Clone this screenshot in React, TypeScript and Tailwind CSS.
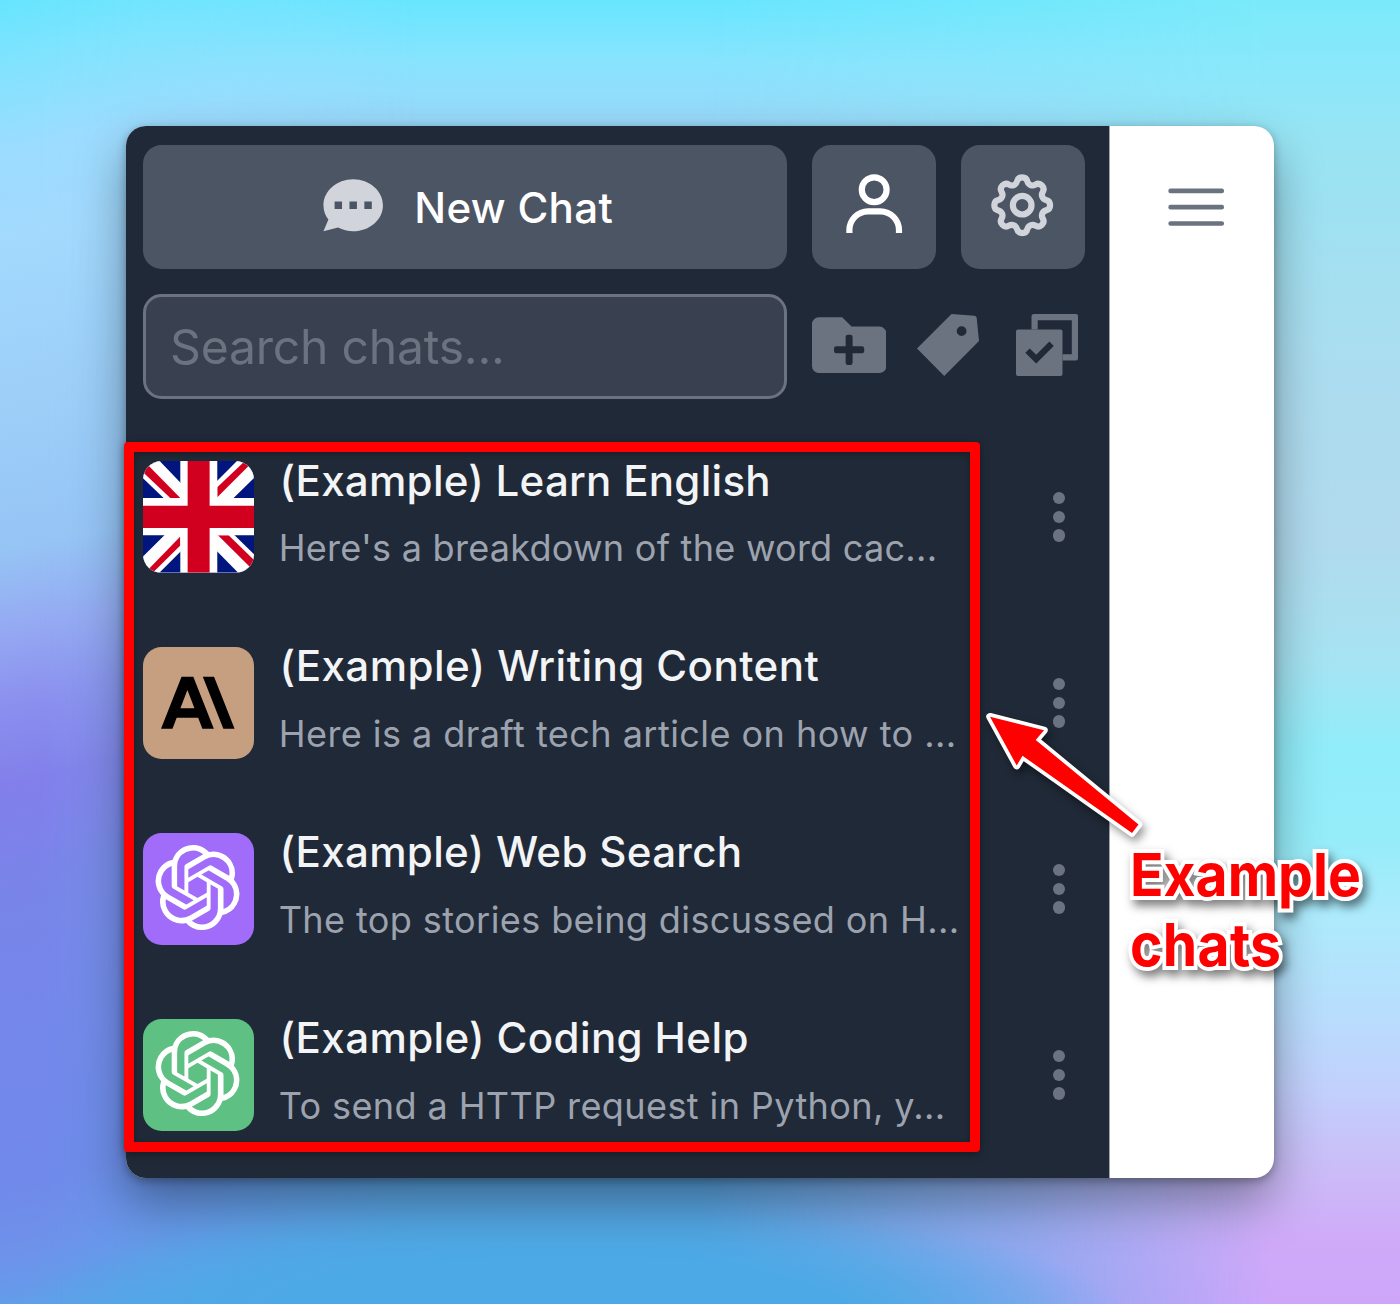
import type { ReactNode } from "react";
import { FaFolderPlus } from "react-icons/fa";
import { SiAnthropic, SiOpenai } from "react-icons/si";

function ChatBubbleIcon() {
  return (
    <svg viewBox="0 0 20 20" className="mb-[3px] size-[74.4px] shrink-0 fill-[#d1d5db]">
      <path
        fillRule="evenodd"
        clipRule="evenodd"
        d="M18 10c0 3.866-3.582 7-8 7a8.841 8.841 0 01-4.083-.98L2 17l1.338-3.123C2.493 12.767 2 11.434 2 10c0-3.866 3.582-7 8-7s8 3.134 8 7zM7 9H5v2h2V9zm8 0h-2v2h2V9zM9 9h2v2H9V9z"
      />
    </svg>
  );
}

function UserIcon() {
  return (
    <svg viewBox="0 0 24 24" className="mb-[3px] size-[74.4px] fill-white">
      <path d="M12 2a5 5 0 1 0 5 5 5 5 0 0 0-5-5zm0 8a3 3 0 1 1 3-3 3 3 0 0 1-3 3zm9 11v-1a7 7 0 0 0-7-7h-4a7 7 0 0 0-7 7v1h2v-1a5 5 0 0 1 5-5h4a5 5 0 0 1 5 5v1z" />
    </svg>
  );
}

function CogIcon() {
  return (
    <svg
      viewBox="0 0 24 24"
      className="mb-[3px] size-[74.4px] fill-none stroke-[#d1d5db]"
      strokeWidth={2}
      strokeLinecap="round"
      strokeLinejoin="round"
    >
      <path d="M10.325 4.317c.426-1.756 2.924-1.756 3.35 0a1.724 1.724 0 002.573 1.066c1.543-.94 3.31.826 2.37 2.37a1.724 1.724 0 001.065 2.572c1.756.426 1.756 2.924 0 3.35a1.724 1.724 0 00-1.066 2.573c.94 1.543-.826 3.31-2.37 2.37a1.724 1.724 0 00-2.572 1.065c-.426 1.756-2.924 1.756-3.35 0a1.724 1.724 0 00-2.573-1.066c-1.543.94-3.31-.826-2.37-2.37a1.724 1.724 0 00-1.065-2.572c-1.756-.426-1.756-2.924 0-3.35a1.724 1.724 0 001.066-2.573c-.94-1.543.826-3.31 2.37-2.37.996.608 2.296.07 2.572-1.065z" />
      <path d="M15 12a3 3 0 11-6 0 3 3 0 016 0z" />
    </svg>
  );
}

function TagIcon() {
  return (
    <svg viewBox="0 0 62 62" className="size-[62px] fill-[#6b7280]">
      <path
        fillRule="evenodd"
        d="M34.5 0 57.5 1.8Q59.6 2 59.7 4L62 27 27.2 62 0 34.6ZM44.6 12.2a4.9 4.9 0 1 0 0 9.8 4.9 4.9 0 0 0 0-9.8Z"
      />
    </svg>
  );
}

function SelectIcon() {
  return (
    <svg viewBox="0 0 62 62" className="size-[62px] fill-[#6b7280]">
      <path
        fillRule="evenodd"
        d="M18 0H60a2 2 0 0 1 2 2V44.5a2 2 0 0 1-2 2H46.5V40.3H55.8V6.2H21.7V15.5H15.5V2.5A2.5 2.5 0 0 1 18 0Z"
      />
      <path
        fillRule="evenodd"
        d="M2 15.5H44.5a2 2 0 0 1 2 2V60a2 2 0 0 1-2 2H2a2 2 0 0 1-2-2V17.5a2 2 0 0 1 2-2ZM9.3 38.8 20.2 49.6 37.8 32 33.4 27.6 20.2 40.8 13.7 34.4Z"
      />
    </svg>
  );
}

function FlagAvatar() {
  return (
    <svg viewBox="68 93 335 335" className="size-full">
      <rect x="68" y="93" width="335" height="335" fill="#00157d" />
      <g fill="#fff">
        <path d="M68 93H118L190 168V214H140L68 145Z" />
        <path d="M403 93H350L285 158V214H330L403 142Z" />
        <path d="M68 428H118L190 356V306H142L68 380Z" />
        <path d="M403 428H353L285 359V306H333L403 375Z" />
      </g>
      <g fill="#d2001f">
        <path d="M68 90 180 204H150L68 127Z" />
        <path d="M403 93H374L291 172V202L403 90Z" />
        <path d="M68 435 180 320V347L98 428Z" />
        <path d="M293 316H325L403 392V425Z" />
      </g>
      <path fill="#fff" d="M180 93h111v335H180zM68 204h335v112H68z" />
      <path fill="#d2001f" d="M202 93h66v335h-66zM68 227h335v67H68z" />
    </svg>
  );
}

type Chat = {
  title: string;
  preview: string;
  avatarClass: string;
  avatar: ReactNode;
  titleTracking: string;
  previewTracking: string;
};

const chats: Chat[] = [
  {
    title: "(Example) Learn English",
    preview: "Here's a breakdown of the word cac...",
    avatarClass: "bg-white",
    avatar: <FlagAvatar />,
    titleTracking: "tracking-[0.25px]",
    previewTracking: "tracking-[0.24px]",
  },
  {
    title: "(Example) Writing Content",
    preview: "Here is a draft tech article on how to ...",
    avatarClass: "bg-[#c69f80]",
    avatar: <SiAnthropic className="mr-px size-[73.6px] text-black" />,
    titleTracking: "tracking-[0.42px]",
    previewTracking: "tracking-[0.43px]",
  },
  {
    title: "(Example) Web Search",
    preview: "The top stories being discussed on H...",
    avatarClass: "bg-[#a26cfa]",
    avatar: <SiOpenai className="mr-px mb-[2px] size-[85px] text-white" />,
    titleTracking: "tracking-[0.3px]",
    previewTracking: "tracking-[0.38px]",
  },
  {
    title: "(Example) Coding Help",
    preview: "To send a HTTP request in Python, y...",
    avatarClass: "bg-[#5fc083]",
    avatar: <SiOpenai className="mr-px mb-[2px] size-[85px] text-white" />,
    titleTracking: "tracking-[0.36px]",
    previewTracking: "tracking-[0.37px]",
  },
];

function ChatRow({ chat }: { chat: Chat }) {
  return (
    <li className="group flex h-[112px] items-start">
      <div
        className={`flex size-[111.6px] shrink-0 items-center justify-center overflow-hidden rounded-[18.6px] ${chat.avatarClass}`}
      >
        {chat.avatar}
      </div>
      <div className="ml-[24.5px] w-[700px] whitespace-nowrap">
        <p
          className={`pl-[0.8px] text-[42.1px] leading-[37px] font-[550] text-[#f3f4f6] group-first:pt-px ${chat.titleTracking}`}
        >
          {chat.title}
        </p>
        <p
          className={`mt-[25px] text-[36.1px] leading-[50px] font-[430] text-[#9ca3af] group-first:mt-[24px] ${chat.previewTracking}`}
        >
          {chat.preview}
        </p>
      </div>
      <div className="mt-[31px] ml-[74.4px] flex flex-col gap-[6.2px]">
        <span className="size-[12.4px] rounded-full bg-[#6b7280]" />
        <span className="size-[12.4px] rounded-full bg-[#6b7280]" />
        <span className="size-[12.4px] rounded-full bg-[#6b7280]" />
      </div>
    </li>
  );
}

function Wallpaper() {
  return (
    <div className="absolute inset-0 bg-[linear-gradient(180deg,#68e6ff_0px,#88e4fe_62px,#9ad8fa_126px,#8fc4f0_500px,#5f9fe0_1100px,#5ba3e0_1178px,#50a8e6_1270px,#50a8e6_1304px)]">
      <div className="absolute inset-0 bg-[linear-gradient(168deg,#66e5ff_0px,#80e3fe_62px,#9cdcff_150px,#a3d9fd_240px,#9ccdf8_420px,#96c4f5_540px,#95a8f2_620px,#8b90ee_690px,#827fea_770px,#7884e8_880px,#7487ea_1020px,#7089ea_1160px,#6e92ea_1230px,#5da3e9_1304px)] mask-[linear-gradient(90deg,#000_0px,#000_40px,transparent_420px)]" />
      <div className="absolute inset-0 bg-[linear-gradient(180deg,#7aeafa_0px,#88e8fa_60px,#98e4f4_140px,#a4e0f1_270px,#addcef_400px,#b1daee_540px,#a6e3f2_660px,#90edf9_750px,#96edfa_840px,#aeeafc_920px,#b8defd_1010px,#c2d0fc_1090px,#cbbcf8_1170px,#cfaaf8_1240px,#cda6fa_1304px)] mask-[linear-gradient(90deg,transparent_700px,rgba(0,0,0,0.5)_1020px,#000_1270px)]" />
      <div className="absolute inset-0 bg-[radial-gradient(ellipse_560px_120px_at_570px_1320px,#4ca9e5_0%,#4ca9e5_50%,transparent_100%)]" />
    </div>
  );
}

export default function App() {
  return (
    <main className="relative h-[1304px] w-[1400px] overflow-hidden p-[126px] font-['Inter',sans-serif]">
      <Wallpaper />

      <div className="relative flex h-[1052px] w-[1148px] overflow-hidden rounded-[20px] bg-white shadow-[0_24px_50px_rgba(0,0,0,0.36),0_3px_10px_rgba(0,0,0,0.3)]">
        <aside className="w-[984px] border-r border-[#9ca3af] bg-[#202937] pt-[19px] pl-[16.6px]">
          <div className="flex gap-[24.9px]">
            <button className="flex h-[124px] w-[644.3px] items-center rounded-[18.6px] bg-[#4c5564] pl-[173.6px]">
              <ChatBubbleIcon />
              <span className="ml-[23.7px] pt-[2px] text-[42.1px] font-[550] tracking-[0.3px] text-white">New Chat</span>
            </button>
            <button className="flex size-[124px] items-center justify-center rounded-[18.6px] bg-[#4c5564]">
              <UserIcon />
            </button>
            <button className="flex size-[124px] items-center justify-center rounded-[18.6px] bg-[#4c5564]">
              <CogIcon />
            </button>
          </div>

          <div className="mt-[25px] flex h-[105px] items-start">
            <div className="flex h-[105px] w-[644.3px] items-center rounded-[18.6px] border-[3px] border-[#6b7280] bg-[#394151] pt-[2px] pl-[24.5px] text-[48.1px] font-[430] tracking-[-0.25px] text-[#6b7280]">
              Search chats...
            </div>
            <div className="ml-[25px] pt-[14px] text-[#6b7280]">
              <FaFolderPlus className="size-[74.4px]" />
            </div>
            <div className="mt-[20px] ml-[31px]">
              <TagIcon />
            </div>
            <div className="mt-[20px] ml-[37px]">
              <SelectIcon />
            </div>
          </div>

          <ul className="mt-[62px] flex flex-col gap-[74px]">
            {chats.map((chat) => (
              <ChatRow key={chat.title} chat={chat} />
            ))}
          </ul>
        </aside>

        <section className="flex-1 pt-[43.6px] pl-[49px]">
          <svg viewBox="0 0 24 24" className="size-[74.4px] fill-none stroke-[#6b7280]" strokeWidth={1.5} strokeLinecap="round">
            <path d="M3.75 6.75h16.5M3.75 12h16.5m-16.5 5.25h16.5" />
          </svg>
        </section>
      </div>

      <div className="absolute top-[442px] left-[124px] h-[710px] w-[856px] rounded-[4px] border-[10px] border-[#fe0000] shadow-[0_2px_8px_rgba(0,0,0,0.35),inset_0_2px_6px_rgba(0,0,0,0.3)]" />

      <svg
        viewBox="970 700 190 150"
        className="absolute top-[700px] left-[970px] h-[150px] w-[190px] overflow-visible drop-shadow-[3px_5px_4px_rgba(0,0,0,0.4)]"
      >
        <path
          d="M990 716.7 1044 730.3 1035.7 740 1138.5 824.5 1132 833 1022.5 755.8 1016.7 765.5Z"
          fill="#fe0000"
          stroke="#fff"
          strokeWidth={7.5}
          strokeLinejoin="round"
          paintOrder="stroke"
        />
      </svg>

      <p className="absolute top-[840px] left-[1129.5px] origin-left scale-x-[0.937] text-[59px] leading-[70px] font-bold text-[#fe0000] drop-shadow-[4px_6px_5px_rgba(0,0,0,0.5)] [-webkit-text-stroke:8px_white] [paint-order:stroke_fill]">
        <span className="block">Example</span>
        <span className="block tracking-[0.3px]">chats</span>
      </p>
    </main>
  );
}
